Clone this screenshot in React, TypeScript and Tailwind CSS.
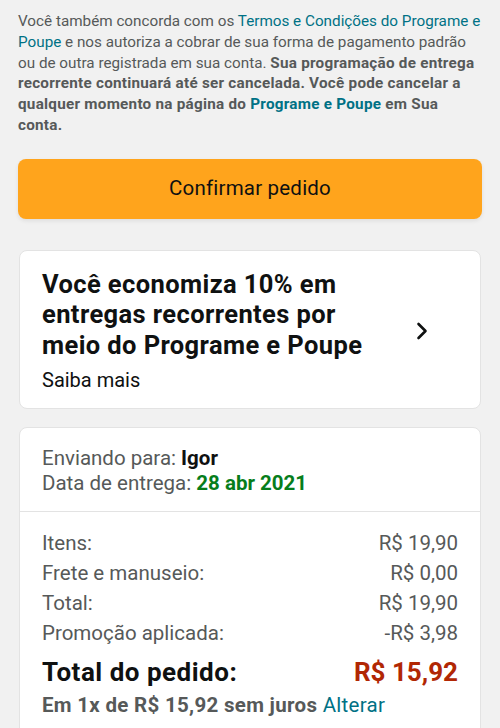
import React, { ReactElement } from "react";

const link = "text-[#007185]";

function Row({ label, value }: { label: string; value: string }): ReactElement {
  return (
    <div className="flex justify-between h-[30px] items-center">
      <span>{label}</span>
      <span>{value}</span>
    </div>
  );
}

export default function App(): ReactElement {
  return (
    <div
      className="min-h-[728px] bg-[#f1f1f1] px-[18px] pt-[11px] pb-6 text-[#111]"
      style={{ fontFamily: 'Roboto, "Noto Sans", Arial, sans-serif' }}
    >
      <p className="text-[15.25px] leading-[20.8px] text-[#565959]">
        Você também concorda com os{" "}
        <span className={link}>Termos e Condições do Programe e Poupe</span> e
        nos autoriza a cobrar de sua forma de pagamento padrão ou de outra
        registrada em sua conta.{" "}
        <strong className="font-bold tracking-[0.25px]">
          Sua programação de entrega recorrente continuará até ser cancelada.
          Você pode cancelar a qualquer momento na página do{" "}
          <span className={link}>Programe e Poupe</span> em Sua conta.
        </strong>
      </p>

      <button className="mt-[23px] flex h-[60px] w-full items-center justify-center rounded-[8px] bg-[#ffa41c] text-[20.5px] tracking-[0.2px] text-[#0f1111] shadow-[0_2px_4px_rgba(0,0,0,0.08)]">
        Confirmar pedido
      </button>

      <div className="mt-[31px] mx-px flex items-center rounded-[8px] border border-[#e3e3e3] bg-white pl-[22px] pr-[52px] pt-[18px] pb-[16px]">
        <div className="flex-1">
          <h2 className="text-[25.5px] font-bold leading-[30.5px] tracking-[0.4px] text-[#0f1111]">
            Você economiza 10% em
            <br />
            entregas recorrentes por
            <br />
            meio do Programe e Poupe
          </h2>
          <div className="mt-[8px] text-[20px] leading-[24px] text-[#0f1111]">
            Saiba mais
          </div>
        </div>
        <svg width="12" height="18" viewBox="0 0 12 18" fill="none">
          <path
            d="M2.5 2 L9.5 9 L2.5 16"
            stroke="#0f1111"
            strokeWidth="2.6"
            strokeLinecap="round"
            strokeLinejoin="round"
          />
        </svg>
      </div>

      <div className="mt-[18px] mx-px rounded-t-[8px] border border-[#e3e3e3] bg-white">
        <div className="px-[22px] pt-[18px] pb-[15px] text-[20.5px] leading-[25px] text-[#565959]">
          <div>
            Enviando para: <strong className="font-bold text-[#0f1111]">Igor</strong>
          </div>
          <div>
            Data de entrega:{" "}
            <strong className="font-bold text-[#067d1b]">28 abr 2021</strong>
          </div>
        </div>
        <div className="border-t border-[#e3e3e3] px-[22px] pt-[16px] pb-[10px] text-[20.5px] text-[#565959]">
          <Row label="Itens:" value="R$ 19,90" />
          <Row label="Frete e manuseio:" value="R$ 0,00" />
          <Row label="Total:" value="R$ 19,90" />
          <Row label="Promoção aplicada:" value="-R$ 3,98" />
          <div className="mt-[8px] flex justify-between items-center h-[32px] text-[26px] font-bold">
            <span className="text-[#0f1111] tracking-[0.5px]">Total do pedido:</span>
            <span className="text-[#b12704]">R$ 15,92</span>
          </div>
          <div className="mt-[2px] text-[20.5px] leading-[30px] tracking-[0.3px]">
            <strong className="font-bold">Em 1x de R$ 15,92 sem juros</strong>{" "}
            <span className={link}>Alterar</span>
          </div>
        </div>
      </div>
    </div>
  );
}
